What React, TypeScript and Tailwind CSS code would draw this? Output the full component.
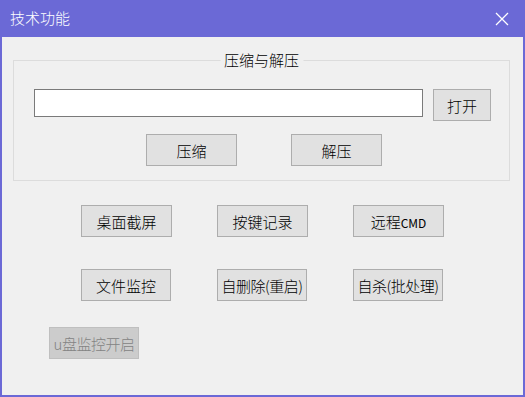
const font = { fontFamily: '"Noto Sans CJK SC", "Liberation Sans", sans-serif' };

function Btn({ label, className }: { label: React.ReactNode; className?: string }) {
  return (
    <button
      type="button"
      className={`h-[32px] border border-[#adadad] bg-[#e1e1e1] text-[15px] font-light text-black leading-none whitespace-nowrap ${className ?? ""}`}
    >
      {label}
    </button>
  );
}

export default function App() {
  return (
    <div
      className="w-[525px] h-[397px] flex flex-col bg-[#f0f0f0] border-x-2 border-b-2 border-[#6b69d6] overflow-hidden"
      style={font}
    >
      {/* title bar */}
      <div className="h-[37px] -mx-[2px] bg-[#6b69d6] flex items-center justify-between pl-[10px] pr-[16px] shrink-0">
        <span className="text-[15px] font-light text-white">技术功能</span>
        <svg width="14" height="14" viewBox="0 0 14 14" className="text-white">
          <path d="M1 1L13 13M13 1L1 13" stroke="currentColor" strokeWidth="1.3" />
        </svg>
      </div>

      {/* group box */}
      <div className="relative mt-[23px] ml-[11px] w-[497px] h-[121px] border border-[#dcdcdc] shrink-0">
        <span className="absolute -top-[11px] left-1/2 -translate-x-1/2 bg-[#f0f0f0] px-[4px] text-[15px] font-light leading-[20px] text-black whitespace-nowrap">
          压缩与解压
        </span>
        <div className="flex items-start gap-[10px] mt-[28px] ml-[20px]">
          <div className="w-[389px] h-[28px] bg-white border border-[#7a7a7a]" />
          <Btn label="打开" className="w-[58px] h-[29px]" />
        </div>
        <div className="flex gap-[54px] mt-[13px] ml-[132px]">
          <Btn label="压缩" className="w-[91px]" />
          <Btn label="解压" className="w-[91px]" />
        </div>
      </div>

      <div className="flex gap-[45px] mt-[24px] ml-[79px]">
        <Btn label="桌面截屏" className="w-[91px]" />
        <Btn label="按键记录" className="w-[91px]" />
        <Btn
          label={
            <>
              远程<span className="text-[12px] font-normal">CMD</span>
            </>
          }
          className="w-[91px]"
        />
      </div>

      <div className="flex gap-[46px] mt-[32px] ml-[79px]">
        <Btn label="文件监控" className="w-[90px]" />
        <Btn label="自删除(重启)" className="w-[90px] tracking-[-0.5px]" />
        <Btn label="自杀(批处理)" className="w-[90px] tracking-[-0.5px]" />
      </div>

      <div className="mt-[26px] ml-[47px]">
        <button
          type="button"
          disabled
          className="w-[90px] h-[32px] border border-[#bfbfbf] bg-[#cccccc] text-[15px] font-light text-[#838383] leading-none whitespace-nowrap tracking-[-0.5px]"
        >
          u盘监控开启
        </button>
      </div>
    </div>
  );
}
